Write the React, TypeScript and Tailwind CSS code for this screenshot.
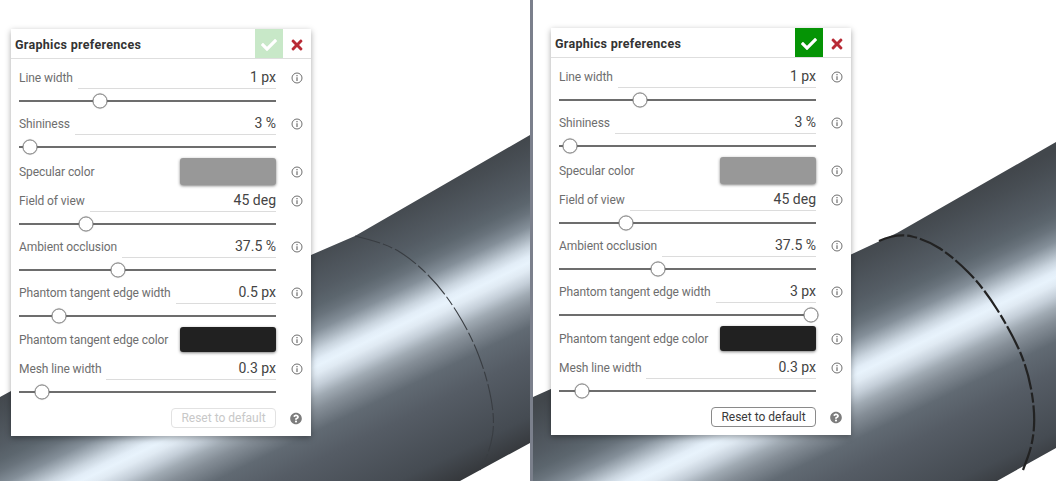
import React from "react";
import { FaCheck, FaTimes, FaQuestionCircle } from "react-icons/fa";

type P = [number, number];
function smooth(pts: P[]): string {
  let d = `M${pts[0][0]} ${pts[0][1]}`;
  for (let i = 1; i < pts.length - 1; i++) {
    const mx = (pts[i][0] + pts[i + 1][0]) / 2;
    const my = (pts[i][1] + pts[i + 1][1]) / 2;
    d += ` Q${pts[i][0]} ${pts[i][1]} ${mx} ${my}`;
  }
  const l = pts[pts.length - 1];
  return d + ` L${l[0]} ${l[1]}`;
}

function Info() {
  return (
    <svg width="12" height="12" viewBox="0 0 12 12" className="block">
      <circle cx="6" cy="6" r="5" fill="none" stroke="#6f6f6f" strokeWidth="1" />
      <path d="M6 3v1.2M6 5.2V9" stroke="#6f6f6f" strokeWidth="1.2" fill="none" />
    </svg>
  );
}

function SliderRow({ label, value, pct }: { label: string; value: string; pct: number }) {
  return (
    <div className="h-[46px]">
      <div className="flex h-[22px] items-center">
        <div className="flex h-full flex-1 items-center">
          <span className="text-[12px] tracking-[-0.08px] text-[#6e6e6e] whitespace-nowrap">{label}</span>
          <span className="ml-[5px] flex h-full flex-1 items-center justify-end border-b border-[#dcdcdc] text-[14px] text-[#444444] whitespace-nowrap">
            {value}
          </span>
        </div>
        <span className="ml-[15px] flex w-[12px] justify-center"><Info /></span>
      </div>
      <div className="flex h-[24px] items-center pr-[27px]">
        <div className="relative h-[2px] w-full bg-[#6d6d6d]">
          <span
            className="absolute top-1/2 h-[15px] w-[15px] -translate-x-1/2 -translate-y-1/2 rounded-full border border-[#8a8a8a] bg-white shadow-[0_0_1px_rgba(0,0,0,0.4)]"
            style={{ left: `${pct}%` }}
          />
        </div>
      </div>
    </div>
  );
}

function ColorRow({ label, swatch, h }: { label: string; swatch: string; h: string }) {
  return (
    <div className={`flex flex-col ${h}`}>
      <div className="-mt-px flex items-center">
        <span className="flex-1 text-[12px] tracking-[-0.08px] text-[#6e6e6e] whitespace-nowrap">{label}</span>
        <span className={swatch} />
        <span className="ml-[15px] flex w-[12px] justify-center"><Info /></span>
      </div>
    </div>
  );
}

function Panel({ done, pct }: { done: boolean; pct: number }) {
  return (
    <div className="relative w-[300px] bg-white shadow-[0_2px_6px_rgba(0,0,0,0.35)] font-['Roboto',sans-serif]">
      <div className="flex h-[30px] items-center border-b border-[#dedede] pl-[4px]">
        <span className="flex-1 pt-[3px] text-[12.5px] font-bold tracking-[0.3px] text-[#333]">Graphics preferences</span>
        <span className={done ? "flex h-[29px] w-[28px] items-center justify-center bg-[#059405] pt-[2px]" : "flex h-[29px] w-[28px] items-center justify-center bg-[#c8e8c8] pt-[2px]"}>
          <FaCheck className="text-white" size={16} />
        </span>
        <span className="flex w-[28px] justify-center pt-[2px] text-[#b82a35]"><FaTimes size={16} /></span>
      </div>
      <div className="pl-[8px] pr-[8px] pt-[8px] pb-[8px]">
        <SliderRow label="Line width" value="1 px" pct={31.5} />
        <SliderRow label="Shininess" value="3 %" pct={4.3} />
        <ColorRow label="Specular color" h="h-[31px]" swatch="h-[27px] w-[96px] rounded-[3px] bg-[#989898] shadow-[0_1px_3px_rgba(0,0,0,0.5)]" />
        <SliderRow label="Field of view" value="45 deg" pct={26} />
        <SliderRow label="Ambient occlusion" value="37.5 %" pct={38.5} />
        <SliderRow label="Phantom tangent edge width" value={done ? "3 px" : "0.5 px"} pct={pct} />
        <ColorRow label="Phantom tangent edge color" h="h-[30px]" swatch="h-[25px] w-[96px] rounded-[3px] bg-[#212121] shadow-[0_1px_3px_rgba(0,0,0,0.5)]" />
        <SliderRow label="Mesh line width" value="0.3 px" pct={9} />
        <div className="mt-[4px] flex items-center justify-end">
          <span className={done
            ? "flex h-[20px] w-[105px] items-center justify-center rounded-[4px] border border-[#8a8a8a] text-[12px] text-[#3a3a3a]"
            : "flex h-[20px] w-[105px] items-center justify-center rounded-[4px] border border-[#e2e2e2] text-[12px] text-[#c8c8c8]"}>
            Reset to default
          </span>
          <span className="ml-[14px] mr-[1px] flex w-[12px] justify-center text-[#7c7c7c]"><FaQuestionCircle size={13} /></span>
        </div>
      </div>
    </div>
  );
}

function Cylinder({ id, w, outline, grad, arc, stroke, sw }: { id: string; w: number; outline: string; grad: [number, number, number, number]; arc: P[]; stroke: string; sw: number }) {
  return (
    <svg width={w} height={481} viewBox={`0 0 ${w} 481`} className="absolute inset-0">
      <defs>
        <linearGradient id={id} gradientUnits="userSpaceOnUse" x1={grad[0]} y1={grad[1]} x2={grad[2]} y2={grad[3]}>
          <stop offset="0" stopColor="#42474c" />
          <stop offset="0.054" stopColor="#474d53" />
          <stop offset="0.167" stopColor="#545c64" />
          <stop offset="0.215" stopColor="#5c666e" />
          <stop offset="0.25" stopColor="#69737c" />
          <stop offset="0.296" stopColor="#848f99" />
          <stop offset="0.33" stopColor="#a8b3bd" />
          <stop offset="0.36" stopColor="#c9d4de" />
          <stop offset="0.39" stopColor="#e2edf7" />
          <stop offset="0.41" stopColor="#e8f3fc" />
          <stop offset="0.435" stopColor="#e0eaf3" />
          <stop offset="0.473" stopColor="#c4ced8" />
          <stop offset="0.51" stopColor="#a0aab3" />
          <stop offset="0.55" stopColor="#858e97" />
          <stop offset="0.62" stopColor="#616a73" />
          <stop offset="0.716" stopColor="#555c65" />
          <stop offset="0.91" stopColor="#454b52" />
          <stop offset="1" stopColor="#36393d" />
        </linearGradient>
      </defs>
      <polygon points={outline} fill={`url(#${id})`} />
      <path d={smooth(arc)} fill="none" stroke={stroke} strokeWidth={sw} strokeDasharray="26 3 10 3" />
    </svg>
  );
}

export default function App() {
  return (
    <div className="flex h-[481px] w-[1056px] overflow-hidden bg-white">
      <div className="relative h-full w-[530px] pl-[11px] pt-[29px]">
        <Cylinder
          id="a"
          w={530}
          outline="530,135 355,236 311,255 11,391 0,397 0,481 460,481 530,443"
          grad={[530, 135, 652, 385]}
          arc={[[355, 236], [385, 243], [413, 260], [443, 290], [470, 333], [487, 377], [495, 420], [490, 450], [480, 470]]}
          stroke="#393d42"
          sw={1.1}
        />
        <Panel done={false} pct={31.5 - 16} />
      </div>
      <div className="h-full w-[3px] bg-[#7b808c]" />
      <div className="relative h-full w-[523px] pl-[18px] pt-[28px]">
        <Cylinder
          id="b"
          w={523}
          outline="523,142 364,233 319,254 0,397 0,481 464,481 523,448"
          grad={[523, 150, 645, 400]}
          arc={[[346, 241], [364, 233], [394, 240], [420, 257], [450, 287], [477, 330], [494, 367], [502, 410], [500, 443], [490, 470]]}
          stroke="#222222"
          sw={2.2}
        />
        <Panel done={true} pct={97.9} />
      </div>
    </div>
  );
}
